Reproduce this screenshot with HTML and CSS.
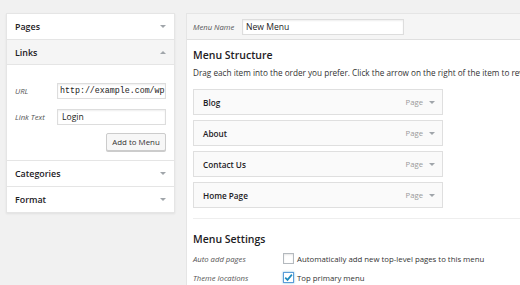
FILE: index.html
```html
<!DOCTYPE html>
<html lang="en">
<head>
    <meta charset="UTF-8">
    <title>Menus</title>
    <link rel="stylesheet" href="styles.css">
</head>
<body>
    <div class="screen">
        <div class="sidebar">
            <div class="acc">
                <div class="acc-head"><span>Pages</span><i class="arrow"></i></div>
            </div>
            <div class="acc open">
                <div class="acc-head"><span>Links</span><i class="arrow up"></i></div>
                <div class="acc-body">
                    <div class="field">
                        <span class="field-label">URL</span>
                        <span class="text mono">http://example.com/wp</span>
                    </div>
                    <div class="field">
                        <span class="field-label">Link Text</span>
                        <span class="text">Login</span>
                    </div>
                    <div class="actions">
                        <button class="button">Add to Menu</button>
                    </div>
                </div>
            </div>
            <div class="acc">
                <div class="acc-head"><span>Categories</span><i class="arrow"></i></div>
            </div>
            <div class="acc">
                <div class="acc-head"><span>Format</span><i class="arrow"></i></div>
            </div>
        </div>

        <div class="editor">
            <div class="editor-head">
                <span class="field-label">Menu Name</span>
                <span class="text name">New Menu</span>
            </div>
            <div class="editor-body">
                <h3>Menu Structure</h3>
                <p class="desc">Drag each item into the order you prefer. Click the arrow on the right of the item to reveal additional configuration options.</p>
                <ul class="menu-items">
                    <li class="item"><span>Blog</span><span class="type">Page <i class="arrow"></i></span></li>
                    <li class="item"><span>About</span><span class="type">Page <i class="arrow"></i></span></li>
                    <li class="item"><span>Contact Us</span><span class="type">Page <i class="arrow"></i></span></li>
                    <li class="item"><span>Home Page</span><span class="type">Page <i class="arrow"></i></span></li>
                </ul>
                <div class="settings">
                    <h3>Menu Settings</h3>
                    <div class="setting">
                        <span class="field-label">Auto add pages</span>
                        <span class="check"></span>
                        <span>Automatically add new top-level pages to this menu</span>
                    </div>
                    <div class="setting">
                        <span class="field-label">Theme locations</span>
                        <span class="check checked">
                            <svg width="9" height="9" viewBox="0 0 9 9"><path d="M1.2 4.6 L3.5 6.9 L7.9 1.6" fill="none" stroke="#1e8cbe" stroke-width="1.7"/></svg>
                        </span>
                        <span>Top primary menu</span>
                    </div>
                </div>
            </div>
        </div>
    </div>
</body>
</html>
```

FILE: styles.css
```css
* {
    margin: 0;
    padding: 0;
    box-sizing: border-box;
}
html, body {
    overflow: hidden;
}
body {
    background: #f1f1f1;
    font-family: "Open Sans", "Liberation Sans", sans-serif;
    color: #222;
    width: 520px;
    height: 285px;
}
.screen {
    display: flex;
    align-items: flex-start;
    gap: 11px;
    padding: 13px 0 0 6px;
    height: 285px;
    overflow: hidden;
}

/* colonne de gauche */
.sidebar {
    width: 169px;
    flex-shrink: 0;
    background: #fff;
    border: 1px solid #e5e5e5;
    box-shadow: 0 1px 2px rgba(0, 0, 0, 0.07);
}
.acc + .acc {
    border-top: 1px solid #e5e5e5;
}
.acc-head {
    height: 25px;
    display: flex;
    align-items: center;
    justify-content: space-between;
    padding: 0 8px 0 8px;
    font-size: 8.9px;
    font-weight: 600;
    color: #1d2024;
}
.open .acc-head {
    background: #f5f5f5;
    border-bottom: 1px solid #e5e5e5;
}
.arrow {
    display: inline-block;
    width: 0;
    height: 0;
    border-left: 3px solid transparent;
    border-right: 3px solid transparent;
    border-top: 3px solid #a0a5aa;
}
.arrow.up {
    border-top: 0;
    border-bottom: 3px solid #a0a5aa;
}
.acc-body {
    padding: 18px 8px 9px 8px;
}
.field {
    display: flex;
    align-items: center;
    margin-bottom: 10px;
}
.field-label {
    font-size: 7.7px;
    font-style: italic;
    color: #555;
    width: 42px;
    flex-shrink: 0;
}
.text {
    display: block;
    flex: 1;
    height: 16px;
    line-height: 14px;
    padding: 0 2px 0 4px;
    border: 1px solid #ddd;
    box-shadow: inset 0 1px 2px rgba(0, 0, 0, 0.07);
    background: #fff;
    font-size: 8.6px;
    color: #222;
    white-space: nowrap;
    overflow: hidden;
}
.mono {
    font-family: "Liberation Mono", "DejaVu Sans Mono", monospace;
    font-size: 8.3px;
    padding: 0 2px;
}
.actions {
    display: flex;
    justify-content: flex-end;
    margin-top: -2px;
}
.button {
    width: 60px;
    height: 18px;
    padding: 0;
    font-family: "Open Sans", "Liberation Sans", sans-serif;
    font-size: 7.9px;
    color: #333;
    background: #f7f7f7;
    border: 1px solid #ccc;
    border-radius: 2px;
    box-shadow: 0 1px 0 #ccc;
}

/* zone d'edition */
.editor {
    width: 400px;
    flex-shrink: 0;
    background: #fff;
    border: 1px solid #e5e5e5;
    height: 290px;
    overflow: hidden;
}
.editor-head {
    height: 26px;
    display: flex;
    align-items: center;
    padding: 0 6px;
    background: #f5f5f5;
    border-bottom: 1px solid #dfdfdf;
}
.editor-head .field-label {
    width: 49px;
}
.text.name {
    flex: none;
    width: 162px;
    padding-left: 3px;
}
.editor-body {
    padding: 8px 6px 0 6px;
}
h3 {
    font-size: 10.5px;
    font-weight: 600;
    line-height: 14px;
    color: #1d2024;
}
.desc {
    margin-top: 4px;
    font-size: 8.2px;
    line-height: 13px;
    color: #333;
    white-space: nowrap;
}
.menu-items {
    list-style: none;
    margin-top: 10px;
    width: 250px;
}
.item {
    height: 26px;
    margin-bottom: 5px;
    display: flex;
    align-items: center;
    justify-content: space-between;
    padding: 0 7px 0 9px;
    background: #fafafa;
    border: 1px solid #dfdfdf;
    font-size: 8.2px;
    font-weight: 600;
    color: #1d2024;
}
.type {
    display: flex;
    align-items: center;
    gap: 6px;
    font-size: 7.7px;
    font-weight: 400;
    color: #999;
}
.settings {
    margin-top: 10px;
    border-top: 1px solid #eee;
    padding-top: 13px;
    margin-right: -10px;
}
.settings h3 {
    margin-bottom: 3px;
}
.setting {
    display: flex;
    align-items: center;
    height: 19px;
    font-size: 7.8px;
    color: #333;
    white-space: nowrap;
}
.setting .field-label {
    width: 90px;
}
.check {
    width: 11px;
    height: 11px;
    margin-right: 3px;
    border: 1px solid #b4b9be;
    background: #fff;
    box-shadow: inset 0 1px 2px rgba(0, 0, 0, 0.1);
    display: flex;
    align-items: center;
    justify-content: center;
}
.check.checked {
    border-color: #5b9dd9;
    box-shadow: 0 0 2px rgba(30, 140, 190, 0.6);
}
```
